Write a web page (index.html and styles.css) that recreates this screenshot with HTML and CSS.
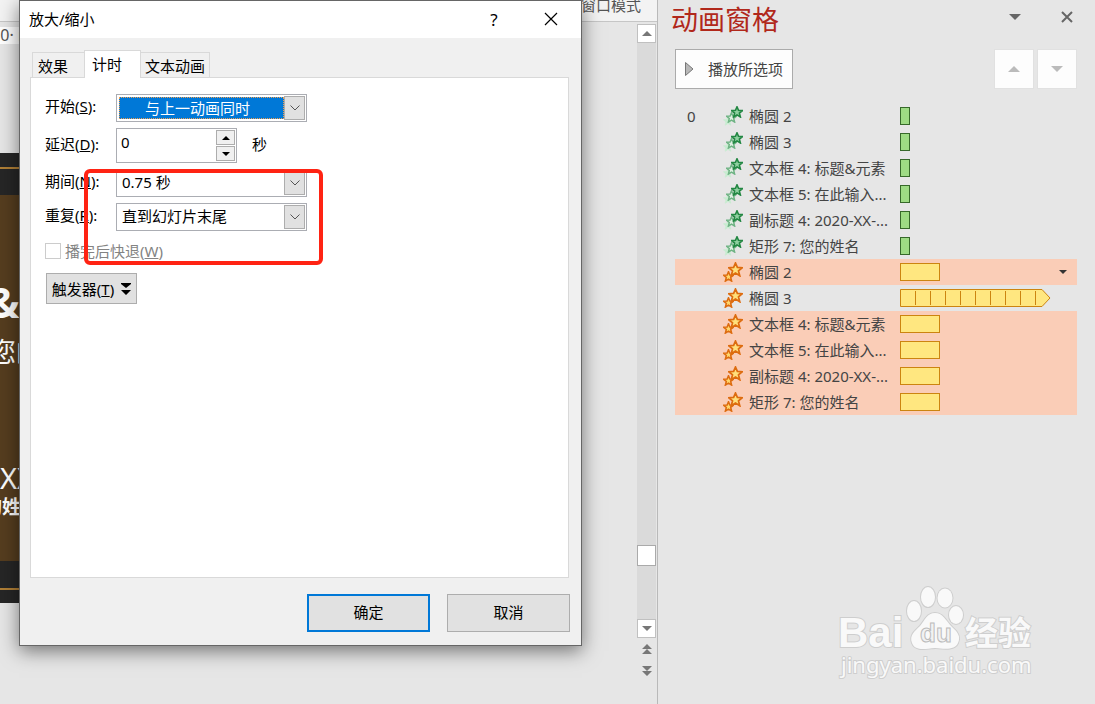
FILE: index.html
```
<!DOCTYPE html>
<html lang="zh-CN">
<head>
<meta charset="utf-8">
<title>动画窗格</title>
<link rel="stylesheet" href="styles.css">
</head>
<body>
<svg class="defs" aria-hidden="true">
  <symbol id="star" viewBox="0 0 12 12"><path d="M6 .8 7.5 4.3 11.4 4.6 8.4 7.1 9.4 11 6 8.9 2.6 11 3.6 7.1 .6 4.6 4.5 4.3Z"/></symbol>
  <symbol id="enter" viewBox="0 0 20 20">
    <use href="#star" x="0" y="10" width="10" height="10" fill="#c9ecd1" stroke="#c9ecd1"/>
    <use href="#star" x="3" y="6" width="11" height="11" fill="#e0f0e3" stroke="#6fb384" stroke-width="1.6"/>
    <use href="#star" x="8" y="0" width="12" height="12" fill="#8fd0a0" stroke="#238743" stroke-width="1.6"/>
  </symbol>
  <symbol id="emphasis" viewBox="0 0 20 20">
    <use href="#star" x="0" y="9" width="11" height="11" fill="#ffd76c" stroke="#dd6c10" stroke-width="1.7"/>
    <use href="#star" x="5" y="0" width="15" height="15" fill="#ffe07c" stroke="#dd6c10" stroke-width="1.4"/>
  </symbol>
</svg>

<main class="editor">
  <div class="ribbon">窗口模式</div>
  <div class="workspace">
    <div class="canvas">
      <div class="ruler">·0· ı</div>
      <div class="slide">
        <div class="band band-top"></div>
        <span class="slide-text slide-title">&amp;</span>
        <span class="slide-text slide-sub">您的</span>
        <span class="slide-text slide-date">XX</span>
        <span class="slide-text slide-name">的姓名</span>
        <div class="band band-bottom"></div>
      </div>
    </div>
    <div class="scrollbar">
      <button class="scroll-btn" aria-label="向上滚动"><svg width="10" height="5"><path d="M0 5 5 0 10 5Z"/></svg></button>
      <div class="track"><div class="thumb"></div></div>
      <button class="scroll-btn" aria-label="向下滚动"><svg width="10" height="5"><path d="M0 0H10L5 5Z"/></svg></button>
      <button class="page-btn" aria-label="上一张"><svg width="10" height="10"><path d="M0 5 5 0 10 5ZM0 10 5 5 10 10Z"/></svg></button>
      <button class="page-btn" aria-label="下一张"><svg width="10" height="10"><path d="M0 0H10L5 5ZM0 5H10L5 10Z"/></svg></button>
    </div>
  </div>
</main>

<aside class="pane">
  <header class="pane-head">
    <h2>动画窗格</h2>
    <button class="plain" aria-label="选项"><svg width="12" height="6"><path d="M0 0H12L6 6Z"/></svg></button>
    <button class="plain" aria-label="关闭"><svg width="12" height="12"><path d="M1 1 11 11M11 1 1 11" stroke="#666" stroke-width="2"/></svg></button>
  </header>
  <div class="pane-tools">
    <button class="play"><svg width="9" height="14"><path d="M.5 .5 8 7 .5 13.5Z" fill="#b8b8b8" stroke="#777"/></svg>播放所选项</button>
    <button class="move" aria-label="上移"><svg width="12" height="6"><path d="M0 6 6 0 12 6Z"/></svg></button>
    <button class="move" aria-label="下移"><svg width="12" height="6"><path d="M0 0H12L6 6Z"/></svg></button>
  </div>
  <ul class="list">
    <li><span class="num">0</span><svg class="ico"><use href="#enter"/></svg><span class="name">椭圆 2</span><i class="bar green"></i></li>
    <li><span class="num"></span><svg class="ico"><use href="#enter"/></svg><span class="name">椭圆 3</span><i class="bar green"></i></li>
    <li><span class="num"></span><svg class="ico"><use href="#enter"/></svg><span class="name">文本框 4: 标题&amp;元素</span><i class="bar green"></i></li>
    <li><span class="num"></span><svg class="ico"><use href="#enter"/></svg><span class="name">文本框 5: 在此输入...</span><i class="bar green"></i></li>
    <li><span class="num"></span><svg class="ico"><use href="#enter"/></svg><span class="name">副标题 4: 2020-XX-...</span><i class="bar green"></i></li>
    <li><span class="num"></span><svg class="ico"><use href="#enter"/></svg><span class="name">矩形 7: 您的姓名</span><i class="bar green"></i></li>
    <li class="on"><span class="num"></span><svg class="ico"><use href="#emphasis"/></svg><span class="name">椭圆 2</span><i class="bar"></i><button class="plain more" aria-label="更多"><svg width="8" height="4"><path d="M0 0H8L4 4Z"/></svg></button></li>
    <li><span class="num"></span><svg class="ico"><use href="#emphasis"/></svg><span class="name">椭圆 3</span><svg class="loop" width="151" height="18"><path d="M.5 .5H142L150 9 142 17.5H.5Z" fill="#ffe780" stroke="#cc8410"/><path d="M15.5 2V16M30.5 2V16M45.5 2V16M60.5 2V16M75.5 2V16M90.5 2V16M105.5 2V16M120.5 2V16M135.5 2V16" stroke="#cc8410"/></svg></li>
    <li class="on"><span class="num"></span><svg class="ico"><use href="#emphasis"/></svg><span class="name">文本框 4: 标题&amp;元素</span><i class="bar"></i></li>
    <li class="on"><span class="num"></span><svg class="ico"><use href="#emphasis"/></svg><span class="name">文本框 5: 在此输入...</span><i class="bar"></i></li>
    <li class="on"><span class="num"></span><svg class="ico"><use href="#emphasis"/></svg><span class="name">副标题 4: 2020-XX-...</span><i class="bar"></i></li>
    <li class="on"><span class="num"></span><svg class="ico"><use href="#emphasis"/></svg><span class="name">矩形 7: 您的姓名</span><i class="bar"></i></li>
  </ul>
  <svg class="watermark" viewBox="0 0 210 110" width="210" height="110" role="img" aria-label="Baidu 经验">
    <g fill="#f9f9f9" stroke="#cecece" stroke-width="2" paint-order="stroke">
      <ellipse cx="85" cy="31" rx="7" ry="10"/>
      <ellipse cx="99" cy="17" rx="7" ry="10"/>
      <ellipse cx="116" cy="18" rx="7.500" ry="9.500"/>
      <ellipse cx="127" cy="35" rx="7" ry="9"/>
      <path d="M106 33C114 33 117 41 123 47 129 52 132 57 129 63 126 70 117 69 106 68 95 69 86 71 83 63 80 55 86 51 91 46 96 40 98 33 106 33Z"/>
      <text class="wm-latin" x="9" y="67">Bai</text>
      <text class="wm-cjk" x="136" y="65">经验</text>
      <text class="wm-url" x="12" y="93">jingyan.baidu.com</text>
    </g>
    <text class="wm-du" x="91" y="62" fill="#f2f2f2" stroke="#bcbcbc">du</text>
  </svg>
</aside>

<section class="dialog" role="dialog" aria-label="放大/缩小">
  <header class="titlebar">
    <span class="caption">放大/缩小</span>
    <button class="plain help" aria-label="帮助">?</button>
    <button class="plain close" aria-label="关闭"><svg width="14" height="14"><path d="M1 1 13 13M13 1 1 13" stroke="#000" stroke-width="1.2"/></svg></button>
  </header>
  <nav class="tabs">
    <button class="tab">效果</button>
    <button class="tab active">计时</button>
    <button class="tab">文本动画</button>
  </nav>
  <form class="sheet">
    <div class="row">
      <label for="start">开始(<u>S</u>):</label>
      <div class="combo focus"><select id="start"><option>与上一动画同时</option></select><span class="drop"><svg width="10" height="6"><path d="M.5 .5 5 5 9.500 .5"/></svg></span></div>
    </div>
    <div class="row">
      <label for="delay">延迟(<u>D</u>):</label>
      <div class="spin"><input id="delay" type="text" value="0"><div class="steps"><button type="button" aria-label="增加"><svg width="8" height="4"><path d="M0 4 4 0 8 4Z"/></svg></button><button type="button" aria-label="减少"><svg width="8" height="4"><path d="M0 0H8L4 4Z"/></svg></button></div></div>
      <span class="unit">秒</span>
    </div>
    <div class="row">
      <label for="period">期间(<u>N</u>):</label>
      <div class="combo"><select id="period"><option>0.75 秒</option></select><span class="drop"><svg width="10" height="6"><path d="M.5 .5 5 5 9.500 .5"/></svg></span></div>
    </div>
    <div class="row">
      <label for="repeat">重复(<u>R</u>):</label>
      <div class="combo"><select id="repeat"><option>直到幻灯片末尾</option></select><span class="drop"><svg width="10" height="6"><path d="M.5 .5 5 5 9.500 .5"/></svg></span></div>
    </div>
    <div class="check"><input id="rewind" type="checkbox" disabled><label for="rewind">播完后快退(<u>W</u>)</label></div>
    <button type="button" class="trigger"><span>触发器(<u>T</u>)</span><svg width="10" height="12"><path d="M0 0H10V1L5 5 0 1ZM0 7H10L5 12Z"/></svg></button>
    <div class="highlight"></div>
  </form>
  <footer class="actions">
    <button class="btn primary">确定</button>
    <button class="btn">取消</button>
  </footer>
</section>
</body>
</html>
```
FILE: styles.css
```
* { box-sizing: border-box; }
body {
  margin: 0;
  min-height: 100vh;
  display: flex;
  position: relative;
  overflow: hidden;
  background: #e6e6e6;
  color: #000;
  font: 15px/20px "Noto Sans", "Noto Sans CJK SC", sans-serif;
}
button, input, select { font: inherit; color: inherit; margin: 0; padding: 0; }
button { display: flex; align-items: center; justify-content: center; white-space: nowrap; }
svg { display: block; }
.defs { position: absolute; width: 0; height: 0; }
.plain { border: 0; background: none; }

/* Editor behind the dialog */
.editor { flex: 1; display: flex; flex-direction: column; }
.ribbon {
  height: 22px;
  padding-right: 16px;
  line-height: 10px;
  text-align: right;
  color: #555;
  background: #f3f3f3;
  border-bottom: 1px solid #c6c6c6;
}
.workspace { flex: 1; display: flex; }
.canvas { flex: 1; padding-top: 5px; }
.ruler {
  height: 17px;
  width: 40px;
  overflow: hidden;
  background: #fff;
  color: #555;
  font-size: 16px;
  line-height: 16px;
  text-indent: -4px;
}
.slide {
  position: relative;
  height: 450px;
  margin: 109px 80px 0 0;
  display: flex;
  flex-direction: column;
  justify-content: space-between;
  overflow: hidden;
  background: #553d1f;
  color: #fff;
}
.band { height: 42px; background: #262626; display: flex; flex-direction: column; }
.band::before { content: ""; height: 2px; background: #b07f36; }
.band-top::before { margin-top: 14px; }
.band-bottom::before { margin-top: 27px; }
.slide-text { position: absolute; white-space: nowrap; }
.slide-title { left: -12px; top: 125px; font-size: 42px; line-height: 48px; font-weight: 700; }
.slide-sub { left: -11px; top: 184px; font-size: 27px; line-height: 30px; }
.slide-date { left: 0; top: 310px; font-size: 29px; line-height: 30px; }
.slide-name { left: -17px; top: 344px; font-size: 19px; line-height: 20px; font-weight: 700; }

.scrollbar { width: 20px; padding-top: 2px; display: flex; flex-direction: column; }
.scroll-btn { width: 19px; height: 19px; background: #fff; border: 1px solid #c0c0c0; fill: #777; }
.track { flex: 1; width: 19px; background: #dadada; display: flex; flex-direction: column; justify-content: flex-end; }
.thumb { height: 21px; margin-bottom: 53px; background: #fff; border: 1px solid #aaa; }
.page-btn { width: 19px; height: 22px; border: 0; background: none; fill: #777; }
.page-btn:last-child { margin-bottom: 22px; }

/* Animation pane */
.pane {
  width: 438px;
  padding: 0 18px 14px 17px;
  border-left: 1px solid #b9b9b9;
  display: flex;
  flex-direction: column;
  color: #444;
}
.pane-head { height: 49px; margin-right: -2px; display: flex; align-items: flex-start; gap: 28px; }
.pane-head h2 { flex: 1; margin: 0 0 0 -4px; font-size: 27px; line-height: 40px; font-weight: 400; color: #b1281b; }
.pane-head .plain { height: 34px; width: 24px; fill: #666; }
.pane-tools { display: flex; align-items: center; gap: 3px; }
.play { height: 40px; width: 118px; gap: 14px; background: #fdfdfd; border: 1px solid #ababab; margin-right: auto; }
.move { width: 40px; height: 40px; background: #fdfdfd; border: 1px solid #e1e1e1; fill: #bbb; }
.list { list-style: none; margin: 14px 0 0; padding: 0; }
.list li { height: 26px; display: flex; align-items: center; }
.list .on { background: #facdb7; }
.num { width: 48px; padding-left: 12px; }
.ico { width: 20px; height: 20px; margin-right: 6px; }
.name { width: 151px; white-space: nowrap; }
.bar { width: 40px; height: 18px; background: #ffe780; border: 1px solid #cc8410; }
.green { width: 10px; background: #9edb84; border-color: #37692a; }
.more { margin-left: auto; width: 28px; height: 26px; fill: #333; }
.watermark { margin: auto 38px 0 auto; }
.wm-latin { font: 700 42px "Liberation Sans", sans-serif; }
.wm-cjk { font: 700 33px "Noto Sans CJK SC", sans-serif; }
.wm-url { font: 22px "Noto Sans", sans-serif; }
.wm-du { font: 700 26px "Liberation Sans", sans-serif; }

/* Effect options dialog */
.dialog {
  position: absolute;
  left: 19px;
  top: 0;
  width: 563px;
  background: #f0f0f0;
  border: 1px solid #666;
  box-shadow: 0 5px 18px rgba(0, 0, 0, .5);
}
.titlebar { height: 37px; display: flex; align-items: center; background: #fff; padding: 0 12px 0 9px; }
.caption { flex: 1; padding-bottom: 2px; }
.help { width: 36px; height: 36px; font-size: 17px; }
.close { width: 36px; height: 36px; margin-left: 21px; padding-bottom: 2px; }
.tabs { display: flex; align-items: flex-end; padding: 12px 0 0 12px; }
.tab { height: 26px; background: #f0f0f0; border: 1px solid #d9d9d9; border-bottom: 0; }
.tab:first-child { width: 52px; padding-left: 5px; justify-content: flex-start; border-right: 0; }
.tab:last-child { width: 69px; border-left: 0; }
.tab.active {
  position: relative;
  z-index: 1;
  width: 57px;
  height: 28px;
  padding: 0 0 2px 7px;
  justify-content: flex-start;
  background: #fff;
}
.sheet {
  position: relative;
  height: 501px;
  margin: -1px 12px 0 10px;
  padding: 16px 14px;
  display: flex;
  flex-direction: column;
  gap: 6px;
  background: #fff;
  border: 1px solid #d9d9d9;
}
.row { display: flex; align-items: center; }
.row label { width: 71px; padding-bottom: 4px; }
.combo { position: relative; width: 191px; height: 28px; padding: 2px; border: 1px solid #abadb3; background: #fff; }
.combo select {
  width: 165px;
  height: 22px;
  display: block;
  padding: 0 0 2px 3px;
  appearance: none;
  border: 0;
  border-radius: 0;
  background: #fff;
}
.combo.focus select { padding: 0 0 0 25px; background: #0078d7; color: #fff; border: 1px dotted #f0a050; }
.drop {
  position: absolute;
  right: 1px;
  top: 1px;
  width: 21px;
  height: 24px;
  display: flex;
  align-items: center;
  justify-content: center;
  background: #e1e1e1;
  border: 1px solid #adadad;
  fill: none;
  stroke: #555;
  pointer-events: none;
}
.spin { width: 121px; height: 35px; padding: 1px; display: flex; border: 1px solid #abadb3; }
.spin input { flex: 1; min-width: 0; border: 0; padding: 0 0 8px 3px; }
.steps { width: 19px; display: flex; flex-direction: column; gap: 1px; }
.steps button { flex: 1; background: #f0f0f0; border: 1px solid #adadad; }
.unit { margin-left: 15px; padding-bottom: 4px; }
.check { height: 28px; display: flex; align-items: center; color: #838383; }
.check input { appearance: none; width: 16px; height: 16px; margin-right: 4px; border: 1px solid #ccc; background: #fff; }
.trigger { width: 91px; height: 31px; margin: 2px 0 0 1px; gap: 7px; background: #e1e1e1; border: 1px solid #adadad; }
.highlight {
  position: absolute;
  left: 53px;
  top: 91px;
  width: 239px;
  height: 96px;
  border: 4px solid #ff2313;
  border-radius: 6px;
  pointer-events: none;
}
.actions { display: flex; justify-content: flex-end; gap: 17px; padding: 16px 11px 13px; }
.btn { width: 123px; height: 38px; padding-bottom: 2px; background: #e1e1e1; border: 1px solid #adadad; }
.primary { border: 2px solid #0078d7; }
```
